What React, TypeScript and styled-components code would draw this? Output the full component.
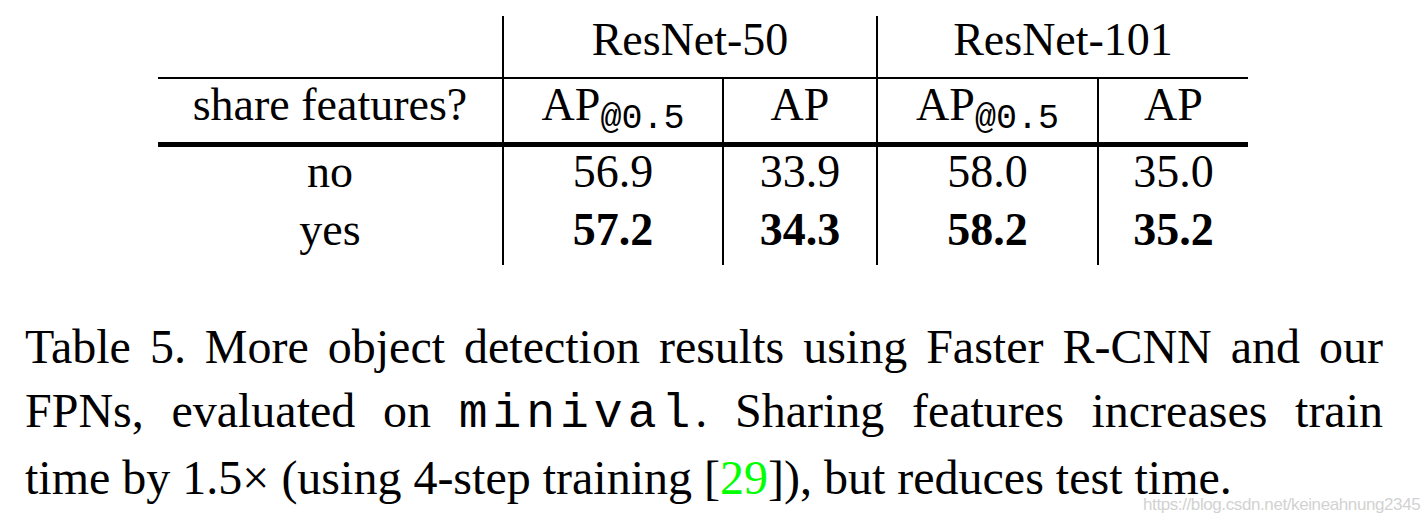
import React from 'react';
import styled, { createGlobalStyle } from 'styled-components';

const GlobalStyle = createGlobalStyle`
  html, body {
    margin: 0;
    padding: 0;
    background: #fff;
  }
`;

const Page = styled.div`
  position: relative;
  width: 1428px;
  height: 516px;
  overflow: hidden;
  background: #fff;
  color: #000;
  font-family: 'Liberation Serif', 'Times New Roman', serif;
`;

const TableWrap = styled.div`
  padding: 16px 0 0 158px;
`;

const Table = styled.table`
  border-collapse: collapse;
  table-layout: fixed;
  width: 1090px;
  font-size: 46px;
`;

interface RowProps {
  h: number;
  pad: number;
}

const Row = styled.tr<RowProps>`
  height: ${props => props.h}px;

  & > td {
    height: ${props => props.h}px;
    padding: ${props => props.pad}px 0 0 0;
  }
`;

interface CellProps {
  right?: boolean;
  bottom?: 'thin' | 'thick';
  bold?: boolean;
}

const Cell = styled.td<CellProps>`
  box-sizing: border-box;
  vertical-align: top;
  text-align: center;
  line-height: 44px;
  white-space: nowrap;
  font-weight: ${props => (props.bold ? 700 : 400)};
  border-right: ${props => (props.right ? '2px solid #000' : 'none')};
  border-bottom: ${props =>
    props.bottom === 'thick' ? '5px solid #000' : props.bottom === 'thin' ? '2px solid #000' : 'none'};
`;

const Sub = styled.sub`
  font-family: 'Liberation Mono', 'Courier New', monospace;
  font-size: 35px;
  vertical-align: -8px;
  line-height: 0;
`;

const Caption = styled.div`
  position: absolute;
  left: 25px;
  top: 315px;
  width: 1358px;
  font-size: 48px;
  line-height: 63.5px;
`;

interface LineProps {
  last?: boolean;
}

const CaptionLine = styled.span<LineProps>`
  display: block;
  white-space: nowrap;
  text-align: ${props => (props.last ? 'left' : 'justify')};
  text-align-last: ${props => (props.last ? 'left' : 'justify')};
`;

const Mono = styled.span`
  font-family: 'Liberation Mono', 'Courier New', monospace;
  letter-spacing: 5px;
`;

const Ref = styled.span`
  color: #00ff00;
`;

const Watermark = styled.div`
  position: absolute;
  left: 1143px;
  top: 495px;
  font-family: 'Liberation Sans', Arial, sans-serif;
  font-size: 17px;
  letter-spacing: -0.4px;
  color: #d2d2d2;
`;

const ApHalf = () => (
  <>
    AP<Sub>@0.5</Sub>
  </>
);

const rows = [
  { label: 'no', values: ['56.9', '33.9', '58.0', '35.0'], bold: false },
  { label: 'yes', values: ['57.2', '34.3', '58.2', '35.2'], bold: true },
];

const App: React.FC = () => {
  return (
    <Page>
      <GlobalStyle />
      <TableWrap>
        <Table>
          <colgroup>
            <col style={{ width: 345 }} />
            <col style={{ width: 220 }} />
            <col style={{ width: 154 }} />
            <col style={{ width: 221 }} />
            <col style={{ width: 150 }} />
          </colgroup>
          <tbody>
            <Row h={62} pad={2}>
              <Cell right bottom="thin" />
              <Cell colSpan={2} right bottom="thin">ResNet-50</Cell>
              <Cell colSpan={2} bottom="thin">ResNet-101</Cell>
            </Row>
            <Row h={66} pad={4}>
              <Cell right bottom="thick">share features?</Cell>
              <Cell right bottom="thick"><ApHalf /></Cell>
              <Cell right bottom="thick">AP</Cell>
              <Cell right bottom="thick"><ApHalf /></Cell>
              <Cell bottom="thick">AP</Cell>
            </Row>
            {rows.map((r, i) => (
              <Row key={r.label} h={i === 0 ? 61 : 60} pad={i === 0 ? 3 : 3}>
                <Cell right>{r.label}</Cell>
                {r.values.map((v, j) => (
                  <Cell key={j} right={j < 3} bold={r.bold}>
                    {v}
                  </Cell>
                ))}
              </Row>
            ))}
          </tbody>
        </Table>
      </TableWrap>
      <Caption>
        <CaptionLine>Table 5. More object detection results using Faster R-CNN and our</CaptionLine>
        <CaptionLine>
          FPNs, evaluated on <Mono>minival</Mono>. Sharing features increases train
        </CaptionLine>
        <CaptionLine last>
          time by 1.5× (using 4-step training [<Ref>29</Ref>]), but reduces test time.
        </CaptionLine>
      </Caption>
      <Watermark>https://blog.csdn.net/keineahnung2345</Watermark>
    </Page>
  );
};

export default App;
